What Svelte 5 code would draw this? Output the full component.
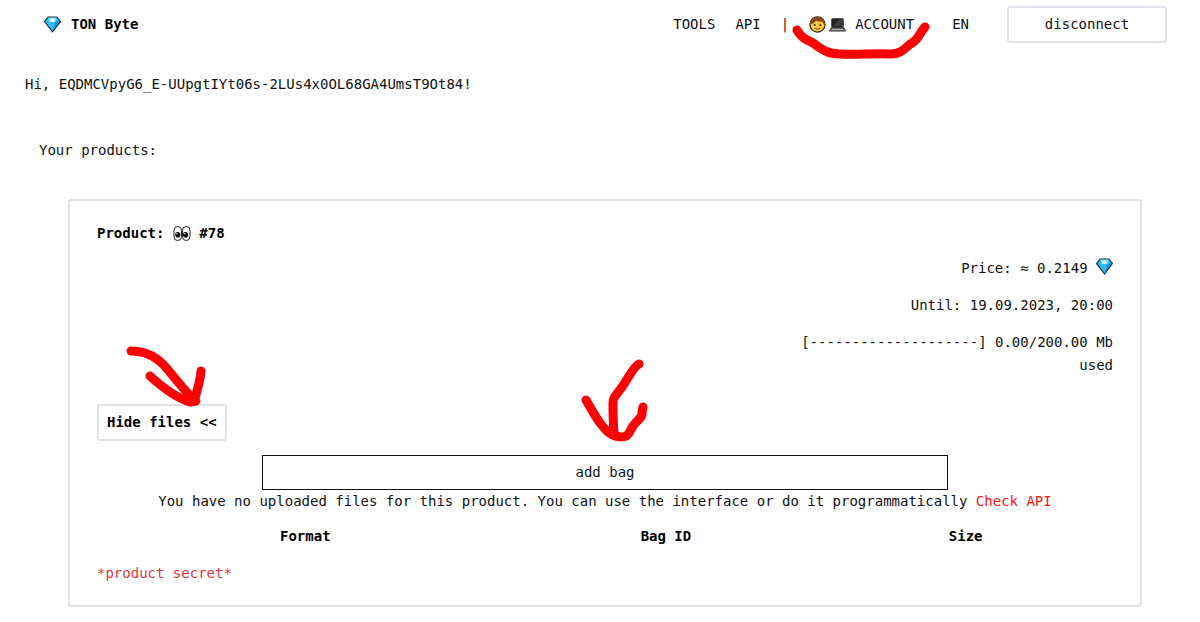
<script>
	const address = 'EQDMCVpyG6_E-UUpgtIYt06s-2LUs4x0OL68GA4UmsT9Ot84';
	const product = {
		id: 78,
		price: '0.2149',
		until: '19.09.2023, 20:00',
		used: 0,
		total: 200
	};
	const columns = ['Format', 'Bag ID', 'Size'];
	const barLength = 20;

	let filesOpen = $state(true);

	const filled = Math.round((product.used / product.total) * barLength);
	const bar = '#'.repeat(filled) + '-'.repeat(barLength - filled);
</script>

{#snippet gem()}
	<svg class="icon" viewBox="0 0 17 17" aria-hidden="true">
		<path d="M4 1h9l3.400 4.600L8.500 16 .6 5.600z" fill="#2fbdf2" />
		<path d="M4 1h9l-1.800 4.600H5.800z" fill="#8be0fb" />
		<path d="M5.300 5.800 8.500 2l3.200 3.800z" fill="#f0fcff" />
		<path d="M11.200 5.600h5L8.500 16z" fill="#1d96d6" />
		<path d="M4 1h9l3.400 4.600L8.500 16 .6 5.600z" fill="none" stroke="#17323f" stroke-width="1.200" stroke-linejoin="round" />
	</svg>
{/snippet}

<header class="topbar">
	<a class="brand" href="#home">{@render gem()}TON Byte</a>
	<nav class="nav">
		<a href="#tools">TOOLS</a>
		<a href="#api">API</a>
		<span class="divider">|</span>
		<a class="account" href="#account">
			<svg class="icon" viewBox="0 0 17 17" aria-hidden="true">
				<circle cx="8.500" cy="8.500" r="7.600" fill="#ffc83d" stroke="#2b2118" stroke-width="1.200" />
				<path d="M1.300 8.500C1 3.500 4.500.9 8.500.9s7.500 2.600 7.200 7.600c-1.200-.5-1.700-1.500-2.200-3-2 .8-5 .2-6.500-.9-.7 2-2.500 3.200-5.700 3.900z" fill="#8a4a1c" />
				<circle cx="5.700" cy="9" r="1" fill="#3b2a1a" />
				<circle cx="11.300" cy="9" r="1" fill="#3b2a1a" />
				<path d="M5.800 12.300q2.700 1.700 5.400 0" fill="none" stroke="#6b3d12" />
			</svg>
			<svg class="icon laptop" viewBox="0 0 17 17" aria-hidden="true">
				<rect x="2.500" y="2.500" width="12" height="9" rx="1" fill="#222" stroke="#555" />
				<path d="M4 10 11 3h2.500v7z" fill="#3d3d3d" />
				<path d="M2 12h13l1.500 3H.5z" fill="#777" stroke="#333" />
				<path d="M3 13.500h11" stroke="#bbb" />
			</svg>
			<span>ACCOUNT</span>
			<svg class="mark mark-account" viewBox="0 0 142 42" aria-hidden="true">
				<path d="M7 10C11 18 17 20 23 23C30 28 36 34 50 34C66 35 86 33 101 34C113 34 116 26 122 23C129 19 130 12 135 7" />
			</svg>
		</a>
		<a class="lang" href="#lang">EN</a>
		<button class="outlined disconnect" type="button">disconnect</button>
	</nav>
</header>

<main>
	<p class="greeting">Hi, {address}!</p>
	<p class="heading">Your products:</p>

	<section class="card">
		<h2 class="product-title">
			Product:
			<svg class="icon eyes" viewBox="0 0 18 17" aria-hidden="true">
				<rect x="1" y="1.500" width="7.500" height="14" rx="3.750" fill="#fff" stroke="#222" />
				<rect x="9.500" y="1.500" width="7.500" height="14" rx="3.750" fill="#fff" stroke="#222" />
				<ellipse cx="4.800" cy="9.800" rx="2.600" ry="2.800" fill="#111" />
				<ellipse cx="12.600" cy="9.800" rx="2.600" ry="2.800" fill="#111" />
				<circle cx="4" cy="8.800" r=".7" fill="#fff" />
				<circle cx="11.900" cy="8.800" r=".7" fill="#fff" />
			</svg>
			#{product.id}
		</h2>

		<div class="details">
			<p>Price: ≈ {product.price} {@render gem()}</p>
			<p>Until: {product.until}</p>
			<p>[{bar}] {product.used.toFixed(2)}/{product.total.toFixed(2)} Mb used</p>
		</div>

		<div class="toggle">
			<button class="outlined hide" type="button" onclick={() => (filesOpen = !filesOpen)}>
				{filesOpen ? 'Hide files <<' : 'Show files >>'}
			</button>
			<svg class="mark mark-toggle" viewBox="0 0 84 64" aria-hidden="true">
				<path d="M7 7C31 7 42 23 49 32C57 42 64 49 70 57M26 32C38 43 53 54 66 58L72 57M77 27C76 40 72 48 71 55" />
			</svg>
		</div>

		{#if filesOpen}
			<div class="files">
				<div class="add">
					<button class="add-bag" type="button">add bag</button>
					<svg class="mark mark-add" viewBox="0 0 70 88" aria-hidden="true">
						<path d="M59 8C53 11 48 23 42 31C36 40 33 40 33 48C33 59 33 66 34 76M6 44C14 58 24 77 35 80C49 83 48 78 53 70C58 63 63 62 62 56L63 51" />
					</svg>
				</div>
				<p class="empty">
					You have no uploaded files for this product. You can use the interface or do it programmatically
					<a href="#api">Check API</a>
				</p>
				<table>
					<thead>
						<tr>
							{#each columns as column}
								<th scope="col">{column}</th>
							{/each}
						</tr>
					</thead>
				</table>
			</div>
		{/if}

		<p class="secret">*product secret*</p>
	</section>
</main>

<style>
	:global(body) {
		margin: 0;
		background: #fff;
		color: #111;
		font-family: 'DejaVu Sans Mono', monospace;
		font-size: 14px;
		line-height: 23px;
	}
	p,
	h2 {
		margin: 0;
		font-size: 14px;
	}
	a {
		color: inherit;
		text-decoration: none;
	}
	button {
		font: inherit;
		color: inherit;
		background: #fff;
		cursor: pointer;
	}
	.icon {
		width: 17px;
		height: 17px;
		flex: none;
		vertical-align: -2px;
	}
	.topbar {
		display: flex;
		align-items: center;
		justify-content: space-between;
		padding: 6px 33px 6px 44px;
	}
	.brand {
		display: flex;
		align-items: center;
		gap: 10px;
		font-weight: bold;
		color: #000;
	}
	.nav {
		display: flex;
		align-items: center;
		gap: 20px;
	}
	.divider {
		color: #8b0000;
	}
	.account {
		position: relative;
		display: flex;
		align-items: center;
		gap: 3px;
	}
	.laptop {
		margin-right: 6px;
	}
	.lang {
		margin: 0 18px;
	}
	.outlined {
		box-sizing: border-box;
		height: 37px;
		padding: 0 8px;
		border: 2px solid #e2e2ea;
		border-radius: 3px;
	}
	.disconnect {
		width: 160px;
	}
	.greeting {
		padding: 24px 25px 0;
	}
	.heading {
		padding: 43px 39px 0;
	}
	.card {
		margin: 37px 58px 16px 68px;
		padding: 21px 27px 20px;
		border: 2px solid #e2e2ea;
		border-radius: 3px;
	}
	.product-title {
		color: #000;
	}
	.eyes {
		width: 18px;
		vertical-align: -4px;
	}
	.details {
		display: flex;
		flex-direction: column;
		gap: 14px;
		width: 33%;
		margin: 12px 0 27px auto;
		text-align: right;
	}
	.toggle {
		position: relative;
		display: flex;
	}
	.hide {
		font-weight: bold;
		color: #000;
	}
	.files {
		margin-top: 14px;
		text-align: center;
	}
	.add {
		position: relative;
		display: flex;
		justify-content: center;
	}
	.add-bag {
		box-sizing: border-box;
		width: 67.5%;
		height: 35px;
		padding: 0;
		border: 1px solid #111;
	}
	.empty a {
		color: #f11;
	}
	table {
		width: 100%;
		margin: 12px 0 14px;
		border-collapse: collapse;
		table-layout: fixed;
	}
	th {
		padding: 0;
		color: #000;
	}
	th:first-child {
		width: 41%;
	}
	th:nth-child(2) {
		width: 30%;
	}
	.secret {
		color: #dc3545;
	}
	/* hand-drawn pointers lying over the page */
	.mark {
		position: absolute;
		fill: none;
		stroke: #f00;
		stroke-width: 9;
		stroke-linecap: round;
		stroke-linejoin: round;
		pointer-events: none;
	}
	.mark-account {
		left: -19px;
		top: 7px;
		width: 142px;
		height: 42px;
	}
	.mark-toggle {
		left: 27px;
		top: -60px;
		width: 84px;
		height: 64px;
	}
	.mark-add {
		left: calc(50% - 25px);
		top: -99px;
		width: 70px;
		height: 88px;
	}
</style>
